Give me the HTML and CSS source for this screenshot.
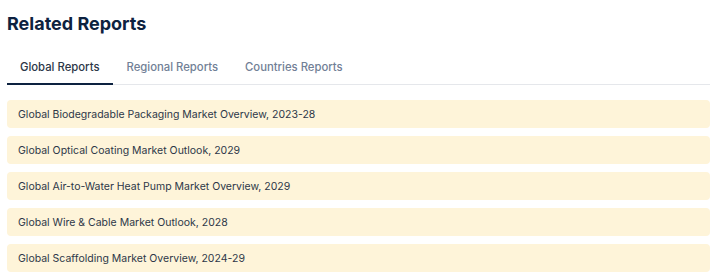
FILE: index.html
```html
<!DOCTYPE html>
<html lang="en">
<head>
    <meta charset="UTF-8">
    <title>Related Reports</title>
    <link rel="stylesheet" href="styles.css">
</head>
<body>
    <section class="related">
        <h2 class="related-title">Related Reports</h2>
        <nav class="tabs">
            <a class="tab active" href="#">Global Reports</a>
            <a class="tab" href="#">Regional Reports</a>
            <a class="tab" href="#">Countries Reports</a>
        </nav>
        <ul class="report-list">
            <li class="report"><a href="#">Global Biodegradable Packaging Market Overview, 2023-28</a></li>
            <li class="report"><a href="#">Global Optical Coating Market Outlook, 2029</a></li>
            <li class="report"><a href="#">Global Air-to-Water Heat Pump Market Overview, 2029</a></li>
            <li class="report"><a href="#">Global Wire &amp; Cable Market Outlook, 2028</a></li>
            <li class="report"><a href="#">Global Scaffolding Market Overview, 2024-29</a></li>
        </ul>
    </section>
</body>
</html>
```

FILE: styles.css
```css
body {
    margin: 0;
    padding: 0;
    background-color: #fff;
    font-family: Inter, "Noto Sans", sans-serif;
}
.related {
    padding: 12px 10px 0 7px;
}
.related-title {
    margin: 0;
    font-size: 18px;
    font-weight: 700;
    line-height: 24px;
    color: #0d2240;
}
.tabs {
    display: flex;
    margin-top: 23px;
    border-bottom: 1px solid #e5e7eb;
}
.tab {
    padding: 0 13.5px 8px;
    font-size: 11.3px;
    font-weight: 500;
    line-height: 16px;
    color: #718096;
    text-decoration: none;
    border-bottom: 2px solid transparent;
    margin-bottom: -1px;
}
.tab:first-child {
    padding-left: 13px;
}
.tab.active {
    color: #2d3748;
    border-bottom-color: #0d2240;
}
.report-list {
    list-style: none;
    margin: 15px 0 0;
    padding: 0;
    display: flex;
    flex-direction: column;
    gap: 8px;
}
.report {
    background-color: #fef4d9;
    border-radius: 4px;
    height: 28px;
    display: flex;
    align-items: center;
    padding: 0 11px;
}
.report a {
    font-size: 10.5px;
    color: #2d3748;
    text-decoration: none;
}
```
